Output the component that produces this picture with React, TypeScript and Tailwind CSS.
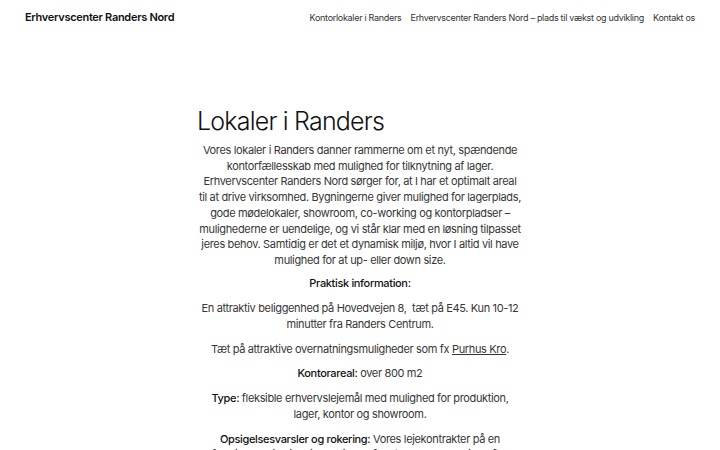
import React from 'react';

const navLinks = [
  'Kontorlokaler i Randers',
  'Erhvervscenter Randers Nord – plads til vækst og udvikling',
  'Kontakt os',
];

const Label: React.FC<{ children: React.ReactNode }> = ({ children }) => (
  <span className="font-medium text-[#111]">{children}</span>
);

export default function App() {
  return (
    <div className="min-h-screen bg-white text-[#363636]" style={{ fontFamily: 'Inter, "Liberation Sans", sans-serif' }}>
      <header className="flex items-center justify-between px-[25px] h-[35px]">
        <a className="text-[11px] font-semibold tracking-[-0.3px] text-[#111]">Erhvervscenter Randers Nord</a>
        <nav className="flex items-center gap-[9px] text-[9px] tracking-[-0.3px] text-[#333]">
          {navLinks.map((link) => (
            <a key={link}>{link}</a>
          ))}
        </nav>
      </header>

      <main className="mx-auto w-[330px] pt-[70px]">
        <h1 className="pl-[2px] text-[25px] font-light leading-[32px] tracking-[-0.8px] text-[#111]">Lokaler i Randers</h1>
        <div className="mt-[6px] space-y-[9px] text-center text-[11px] leading-[15.7px] tracking-[-0.35px]">
          <p>
            Vores lokaler i Randers danner rammerne om et nyt, spændende
            <br />
            kontorfællesskab med mulighed for tilknytning af lager.
            <br />
            Erhvervscenter Randers Nord sørger for, at I har et optimalt areal
            <br />
            til at drive virksomhed. Bygningerne giver mulighed for lagerplads,
            <br />
            gode mødelokaler, showroom, co-working og kontorpladser –
            <br />
            mulighederne er uendelige, og vi står klar med en løsning tilpasset
            <br />
            jeres behov. Samtidig er det et dynamisk miljø, hvor I altid vil have
            <br />
            mulighed for at up- eller down size.
          </p>
          <p className="-mt-[2px]">
            <Label>Praktisk information:</Label>
          </p>
          <p className="pt-[1px]">
            En attraktiv beliggenhed på Hovedvejen 8,&nbsp; tæt på E45. Kun 10-12
            <br />
            minutter fra Randers Centrum.
          </p>
          <p>
            Tæt på attraktive overnatningsmuligheder som fx <a className="underline">Purhus Kro</a>.
          </p>
          <p>
            <Label>Kontorareal:</Label> over 800 m2
          </p>
          <p>
            <Label>Type:</Label> fleksible erhvervslejemål med mulighed for produktion,
            <br />
            lager, kontor og showroom.
          </p>
          <p>
            <Label>Opsigelsesvarsler og rokering:</Label> Vores lejekontrakter på en
            <br />
            fleksibel basis giver jer mulighed for at rokere og udvide efter behov.
          </p>
        </div>
      </main>
    </div>
  );
}
